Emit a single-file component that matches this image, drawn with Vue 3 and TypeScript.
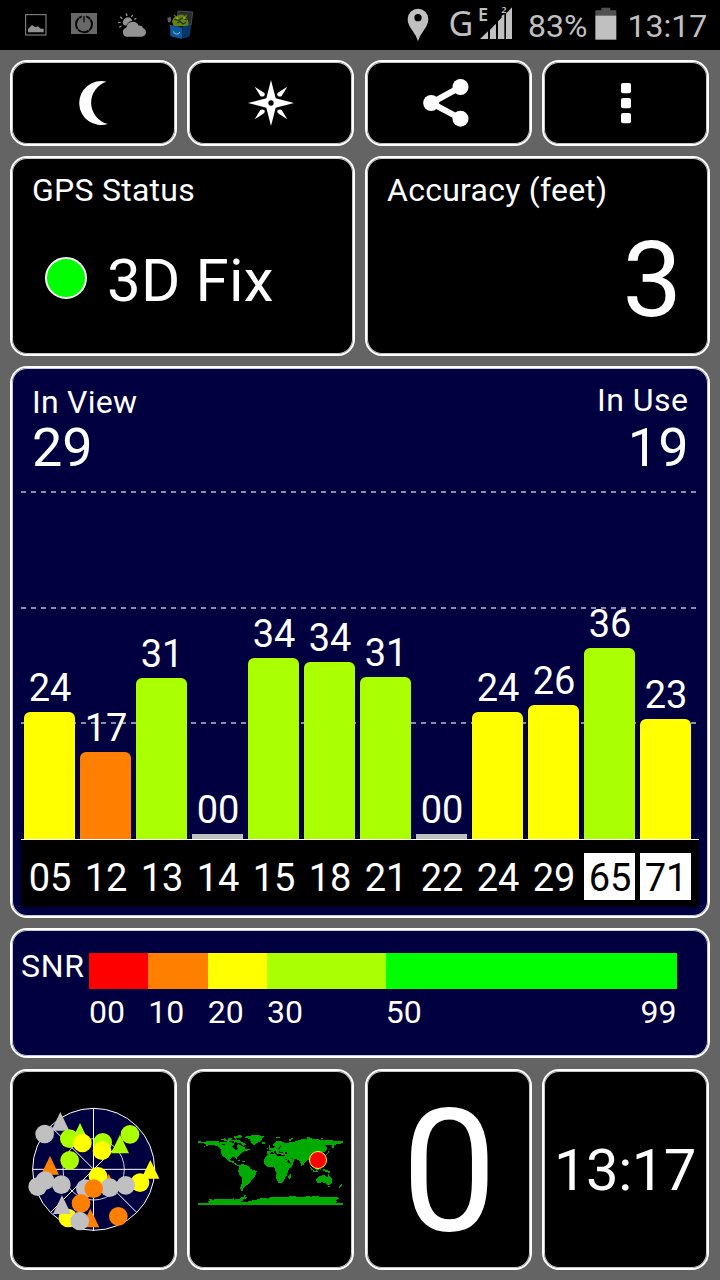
<script setup lang="ts">
interface Satellite {
  id: string
  snr: string
  height: number
  color: string
  inverted?: boolean
}

const LIME = '#aaff00'
const YELLOW = '#ffff00'
const ORANGE = '#ff8000'
const GREY = '#c0c0c0'

const satellites: Satellite[] = [
  { id: '05', snr: '24', height: 127, color: YELLOW },
  { id: '12', snr: '17', height: 87, color: ORANGE },
  { id: '13', snr: '31', height: 161, color: LIME },
  { id: '14', snr: '00', height: 5, color: GREY },
  { id: '15', snr: '34', height: 181, color: LIME },
  { id: '18', snr: '34', height: 177, color: LIME },
  { id: '21', snr: '31', height: 162, color: LIME },
  { id: '22', snr: '00', height: 5, color: GREY },
  { id: '24', snr: '24', height: 127, color: YELLOW },
  { id: '29', snr: '26', height: 134, color: YELLOW },
  { id: '65', snr: '36', height: 191, color: LIME, inverted: true },
  { id: '71', snr: '23', height: 120, color: YELLOW, inverted: true },
]

const scale = [
  { label: '00', span: 10, color: '#ff0000' },
  { label: '10', span: 10, color: ORANGE },
  { label: '20', span: 10, color: YELLOW },
  { label: '30', span: 20, color: LIME },
  { label: '50', span: 49, color: '#00ff00' },
]

type Mark = { t?: boolean; x: number; y: number; c: string }

// Drawn in order; triangles use x/y as the centre of their bounding box.
const marks: Mark[] = [
  { t: true, x: 181, y: 184, c: GREY },
  { x: 134, y: 222, c: GREY },
  { t: true, x: 240, y: 217, c: LIME },
  { x: 208, y: 236, c: LIME },
  { x: 247, y: 249, c: YELLOW },
  { x: 308, y: 247, c: LIME },
  { x: 390, y: 223, c: LIME },
  { t: true, x: 360, y: 252, c: LIME },
  { x: 306, y: 272, c: YELLOW },
  { x: 209, y: 301, c: LIME },
  { t: true, x: 150, y: 316, c: ORANGE },
  { x: 135, y: 362, c: GREY },
  { x: 113, y: 380, c: GREY },
  { x: 184, y: 374, c: GREY },
  { t: true, x: 326, y: 369, c: ORANGE },
  { x: 256, y: 386, c: GREY },
  { x: 294, y: 349, c: YELLOW },
  { x: 329, y: 383, c: GREY },
  { x: 420, y: 368, c: YELLOW },
  { x: 377, y: 376, c: GREY },
  { x: 281, y: 386, c: ORANGE },
  { t: true, x: 451, y: 328, c: YELLOW },
  { x: 243, y: 430, c: ORANGE },
  { x: 204, y: 474, c: YELLOW },
  { t: true, x: 186, y: 434, c: GREY },
  { t: true, x: 271, y: 474, c: ORANGE },
  { x: 239, y: 483, c: GREY },
  { x: 355, y: 469, c: ORANGE },
]

const triangle = (m: Mark) =>
  `${m.x},${m.y - 28} ${m.x + 27},${m.y + 28} ${m.x - 27},${m.y + 28}`
</script>

<template>
  <div class="screen">
    <header class="status">
      <svg class="notes" width="180" height="50" viewBox="60 0 540 150">
        <rect x="77" y="44" width="61" height="61" fill="none" stroke="#929292" stroke-width="3" />
        <path d="M84 97V87L96 75L106 82L114 79L122 86L131 86V97Z" fill="#929292" />
        <rect x="213" y="39" width="78" height="63" fill="#686868" />
        <circle cx="252" cy="73" r="24" fill="none" stroke="#080808" stroke-width="6" stroke-dasharray="35.700 2" stroke-dashoffset="16" />
        <path d="M252 43V56" stroke="#686868" stroke-width="13" />
        <path d="M252 48V67" stroke="#080808" stroke-width="4" />
        <g fill="#929292">
          <path d="M369 72A16 16 0 0 1 383 52Q392 52 397 62Q383 65 379 77Q373 77 369 72Z" />
          <path d="M379 110A14 14 0 0 1 379 83Q382 65 398 65Q411 65 416 77Q426 75 430 85Q438 88 438 97Q437 110 424 110Z" />
        </g>
        <path d="M379 40L381 48M398 45L394 51M361 50L367 56M354 67L362 68M358 82L364 78M403 58L409 55" stroke="#929292" stroke-width="4" />
        <path d="M534 33L578 36L573 76L531 70Z" fill="#292d30" stroke="#484b4c" stroke-width="3" />
        <path d="M521 78Q511 59 525 51L520 43L531 49Q543 39 554 48L562 42L558 53Q570 66 563 79Z" fill="#66820c" />
        <path d="M523 58L536 61L547 54L561 60M532 69L540 64L549 72L558 67" fill="none" stroke="#24350a" stroke-width="4" />
        <circle cx="532" cy="55" r="3" fill="#9bb52b" /><circle cx="552" cy="54" r="3" fill="#9bb52b" />
        <path d="M510 76L547 84V117L511 109Z" fill="#0b579b" />
        <path d="M547 84L574 72L569 109L547 117Z" fill="#063768" />
        <path d="M508 76L547 82L574 71" fill="none" stroke="#1d5f9c" stroke-width="2" />
        <path d="M520 94Q521 102 530 102Q539 103 539 96" fill="none" stroke="#a6b7c6" stroke-width="3" />
        <path d="M502 53L512 51L514 59L510 68L504 66Z" fill="#59616b" />
      </svg>
      <svg class="pin" width="22" height="34" viewBox="140 24 66 102">
        <path d="M173 124Q168 107 155 90Q142 73 142 57A31 31 0 0 1 204 57Q204 73 191 90Q178 107 173 124ZM173 42A11 11 0 1 0 173 64A11 11 0 1 0 173 42Z" fill="#c0c0c0" fill-rule="evenodd" />
      </svg>
      <span class="net">G</span>
      <svg class="signal" width="36" height="40" viewBox="354 0 108 120">
        <text x="354" y="64" class="tiny-e">E</text>
        <text x="424" y="38" class="tiny-2">2</text>
        <path d="M360 117L384 94V117ZM390 117V89L408 71V117ZM414 117V64L425 53V47L433 43V117ZM438 117V41L456 22V117Z" fill="#c0c0c0" />
      </svg>
      <span class="pct">83%</span>
      <svg class="battery" width="22" height="34" viewBox="704 22 66 102">
        <path d="M723 24H750V32H768V49H705V32H723Z" fill="#505050" />
        <rect x="705" y="48" width="63" height="72" fill="#c0c0c0" />
      </svg>
      <span class="clock">13:17</span>
    </header>

    <main class="board">
      <section class="row buttons">
        <button class="card center">
          <svg width="50" height="50" viewBox="205.5 234 150 150">
            <path d="M318 245A66 66 0 1 0 322 372A66 66 0 0 1 318 245Z" fill="#fff" />
          </svg>
        </button>
        <button class="card center">
          <svg width="50" height="50" viewBox="198 84 150 150">
            <path d="M273 90L287 145L342 159L287 173L273 228L259 173L204 159L259 145Z" fill="#fff" />
            <g fill="#fff">
              <path d="M224 110L250 127Q257 131 253 137Q247 142 241 138Z" />
              <path d="M322 110L296 127Q289 131 293 137Q299 142 305 138Z" />
              <path d="M224 208L250 191Q257 187 253 181Q247 176 241 180Z" />
              <path d="M322 208L296 191Q289 187 293 181Q299 176 305 180Z" />
            </g>
            <circle cx="273" cy="159" r="8" fill="#000" />
          </svg>
        </button>
        <button class="card center">
          <svg width="50" height="50" viewBox="188.5 234 150 150" overflow="visible">
            <path d="M301 261L213 309L301 356" fill="none" stroke="#fff" stroke-width="18" />
            <g fill="#fff"><circle cx="301" cy="261" r="24" /><circle cx="213" cy="309" r="24" /><circle cx="301" cy="356" r="24" /></g>
          </svg>
        </button>
        <button class="card center">
          <svg width="50" height="50" viewBox="720 234 150 150">
            <g fill="#fff">
              <rect x="783" y="249" width="30" height="31" rx="6" />
              <rect x="783" y="294" width="30" height="31" rx="6" />
              <rect x="783" y="339" width="30" height="31" rx="6" />
            </g>
          </svg>
        </button>
      </section>

      <section class="row readouts">
        <article class="card info">
          <div class="label">GPS Status</div>
          <div class="fix"><i class="dot"></i><span>3D Fix</span></div>
        </article>
        <article class="card info">
          <div class="label">Accuracy (feet)</div>
          <div class="accuracy">3</div>
        </article>
      </section>

      <section class="card navy chart">
        <svg class="grid-lines" width="678" height="240" viewBox="0 0 678 240">
          <path d="M0 2H675M0 118H675M0 233H675" stroke="#8c8ca6" stroke-width="2" stroke-dasharray="5 5" />
        </svg>
        <div class="totals">
          <div><div class="label">In View</div><div class="count">29</div></div>
          <div class="right"><div class="label">In Use</div><div class="count">19</div></div>
        </div>
        <div class="plot">
          <div v-for="s in satellites" :key="s.id" class="col">
            <span class="snr">{{ s.snr }}</span>
            <div class="bar" :class="{ flat: s.height < 10 }" :style="{ height: s.height + 'px', background: s.color }"></div>
          </div>
        </div>
        <div class="ids">
          <span v-for="s in satellites" :key="s.id" class="id" :class="{ inverted: s.inverted }">{{ s.id }}</span>
        </div>
      </section>

      <section class="card navy legend">
        <span class="legend-title">SNR</span>
        <div class="scale">
          <div v-for="s in scale" :key="s.label" class="seg" :style="{ flexGrow: s.span }">
            <div class="swatch" :style="{ background: s.color }"></div>
            <div class="ticks"><span>{{ s.label }}</span><span v-if="s.label === '50'">99</span></div>
          </div>
        </div>
      </section>

      <section class="row bottom">
        <article class="card center">
          <svg width="134" height="134" viewBox="81 129 402 402">
            <circle cx="281" cy="328" r="183" fill="#000040" />
            <g fill="none" stroke="#fff" stroke-width="3">
              <circle cx="281" cy="328" r="183" />
              <circle cx="281" cy="328" r="92" stroke="#d0d0e0" />
              <path d="M97 328H465M280.500 145V512M152 199L410 457M410 199L152 457" />
            </g>
            <template v-for="(m, i) in marks" :key="i">
              <polygon v-if="m.t" :points="triangle(m)" :fill="m.c" />
              <circle v-else :cx="m.x" :cy="m.y" r="28" :fill="m.c" />
            </template>
          </svg>
        </article>
        <article class="card center">
          <svg width="150" height="100" viewBox="33 0 450 300">
            <g fill="#00aa00" shape-rendering="crispEdges">
              <path d="M39 62H48V66H57L70 62L100 64L115 67L130 64L145 69L151 65L146 76L141 80L148 87L154 91L158 86L155 78L160 73L168 76L175 81L183 83L180 88L190 88L187 93L178 94L171 98L164 106L158 110L156 119L151 112L140 112L136 119L140 124L148 121L147 128L153 130L157 136L166 135L162 139L153 136L147 130L135 126L128 120L118 111L112 108L108 98V89L99 80L87 75L74 74L65 79L56 80L67 75L57 72L60 68L39 68Z" />
              <path d="M106 58L118 55L126 60L134 57L145 61L155 58L164 60L171 67L180 69L183 76L174 77L167 70L155 67L146 64L129 64L118 62ZM128 53H140V56H128ZM145 48L165 46L178 48L166 51L170 55L158 53L150 57ZM148 51H157V54H148Z" />
              <path d="M180 50L193 48L206 45L224 46L230 48L240 50L232 54L230 61L223 66L215 69L206 76L200 70L197 63L192 56L181 54Z" />
              <path d="M232 67H240V71H232ZM188 86H194V91H188ZM152 119L163 121L171 124L162 123ZM172 124H181V126H172Z" />
              <path d="M164 137L170 132L180 134L188 138L194 141L197 147L206 150L215 154L212 163L207 173L200 179L195 187L187 195L180 198L177 205L172 206L176 213L168 212L165 204L169 194L172 181V173L163 163L159 154L162 145Z" />
              <path d="M247 104L257 101L272 102L276 107L288 108L298 108L304 118L310 129L317 131L326 129L321 139L311 147L308 157L306 166L300 173L297 182L290 188L281 190L276 182L273 171L275 161L271 152L268 142L259 140L247 142L238 131L237 121L242 111Z" />
              <path d="M316 162H318L317 174L313 178L309 174L311 167Z" />
              <path d="M246 101V93H255L259 91L254 87L262 84L273 81L269 78L263 76L267 69L277 63L290 64L297 68L303 70L316 66L330 65L343 59L360 57L373 53L387 57L401 58L410 61L435 60L455 63L473 62V68L465 72L449 74L446 83L440 84L441 74L431 76L420 76L426 82L427 89L418 96L411 97L414 103L409 112L404 119L407 128L402 135L395 128L389 130L391 141L384 137L377 121L368 121L359 128L355 135L350 138L345 124L337 119L329 117L326 125L318 131L308 123L302 113L299 106L290 105L286 101L278 104L274 97L277 96L270 93L266 96L272 102L269 104L261 95L254 102Z" />
              <path d="M250 78L254 76L256 83L260 87L251 90L253 83ZM246 84H250V88H246ZM273 51L287 50L282 54H275ZM310 60L320 55L328 53L319 60L313 64ZM364 53L378 51L371 55ZM403 53L417 54L409 57ZM424 103L429 96V90L433 96L426 105L418 109ZM373 138L381 145L386 152L380 150ZM385 153H398V155H385ZM390 145L401 139L402 148L394 152ZM404 146L411 147L406 152ZM413 148L426 149L436 155L434 159L425 156L415 152Z" />
              <path d="M394 176L403 169L411 166L419 164L422 170L427 172L430 162L435 170L441 177L440 187L435 195L427 194L420 188L410 187L401 190L395 188Z" />
              <path d="M430 198H436V201H430ZM458 202L466 197L472 190L471 197L463 203Z" />
              <path d="M39 249H75L67 245L75 241L73 238L87 239V236L119 237L135 238L146 235V239L164 237L166 233L178 231L175 228L186 223L181 230L187 234L178 237L171 240L175 242L168 244L171 246H186L191 242L213 241L216 237L238 233L247 236L257 232L300 232L315 229L330 228L341 232L361 231L366 228L379 230L391 227L405 230L426 230L438 232L457 232L462 236L451 241L456 244L451 248L474 249V255H39Z" />
            </g>
            <g fill="#000" shape-rendering="crispEdges">
              <path d="M282 94L294 96V99L282 98ZM299 95H304L307 102L303 104ZM282 82L288 77L285 86L276 88ZM304 117L315 124L312 127ZM317 111L327 117L324 119Z" />
              <path d="M112 73H119V75H112ZM150 101H156V103H150ZM101 66H105V70H101Z" />
            </g>
            <circle cx="399" cy="120" r="25.500" fill="#ff0000" stroke="#ffff00" stroke-width="3" />
          </svg>
        </article>
        <article class="card center"><span class="speed">0</span></article>
        <article class="card center"><span class="time">13:17</span></article>
      </section>
    </main>
  </div>
</template>

<style>
body {
  margin: 0;
  background: #646464;
}
</style>

<style scoped>
.screen {
  width: 720px;
  height: 1280px;
  overflow: hidden;
  background: #646464;
  color: #fff;
  font-family: Roboto, "Noto Sans", sans-serif;
  display: flex;
  flex-direction: column;
}
svg { display: block; flex: none; }

.status {
  height: 50px;
  flex: none;
  background: #000;
  color: #c0c0c0;
  display: flex;
  align-items: flex-start;
  font-size: 32px;
  line-height: 40px;
}
.notes { margin-left: 20px; }
.pin { margin: 8px 0 0 206.500px; }
.net {
  width: 28px;
  margin: 0 0 0 20px;
  font-family: "Noto Sans", sans-serif;
  font-size: 34px;
  line-height: 47px;
}
.signal { margin-left: 1.500px; overflow: visible; }
.tiny-e, .tiny-2 { font-family: "Noto Sans", sans-serif; font-weight: 600; fill: #c0c0c0; }
.tiny-e { font-size: 54px; }
.tiny-2 { font-size: 28px; }
.pct { width: 60px; margin: 6px 0 0 14px; }
.battery { margin: 7px 0 0 6.500px; }
.clock { margin: 6px 0 0 11px; }

.board {
  padding: 10px;
  display: flex;
  flex-direction: column;
  gap: 10px;
}
.row { display: grid; column-gap: 10.333px; }
.buttons { grid-template-columns: repeat(4, 1fr); height: 86px; margin-right: 1px; }
.readouts { grid-template-columns: repeat(2, 1fr); column-gap: 10px; height: 200px; }
.bottom { grid-template-columns: repeat(4, 1fr); height: 201px; margin: 1px 1px 0 0; }

.card {
  box-sizing: border-box;
  min-width: 0;
  margin: 0;
  padding: 0;
  border: 2px solid #fff;
  border-radius: 17px;
  box-shadow: inset 0 0 0 1px #c8c8c8;
  background: #000;
  color: #fff;
  font-family: inherit;
}
.navy { background: #000040; box-shadow: inset 0 0 0 1px #c8c8d8; }
.center { display: flex; align-items: center; justify-content: center; }

.label { font-size: 32px; line-height: 40px; letter-spacing: 0.250px; }
.info { padding: 12px 26px 0 20px; }
.fix {
  display: flex;
  align-items: center;
  margin-top: 41px;
  font-size: 60px;
  line-height: 60px;
  letter-spacing: 0.200px;
}
.dot {
  box-sizing: border-box;
  width: 42px;
  height: 42px;
  margin: 0 20px 6px 13px;
  border: 2px solid #fff;
  border-radius: 50%;
  background: #00ff00;
}
.accuracy { margin-top: 20px; text-align: right; font-size: 106px; line-height: 100px; }

.chart {
  position: relative;
  height: 552px;
  padding: 1px 9px 1px 9px;
}
.grid-lines { position: absolute; left: 9px; top: 122px; }
.totals {
  height: 92px;
  padding: 14px 10.500px 0 11px;
  display: flex;
  justify-content: space-between;
}
.totals .label { line-height: 38px; }
.count { font-size: 54px; line-height: 54px; }
.right { text-align: right; margin-top: -2px; }
.right .label { letter-spacing: 0.500px; }
.right .count { margin-top: 2px; }
.plot {
  position: relative;
  height: 364px;
  padding-left: 3px;
  border-bottom: 1px solid #fff;
  display: flex;
  align-items: flex-end;
  gap: 5px;
}
.col { width: 51px; flex: none; text-align: center; }
.snr { display: block; margin-bottom: 2px; font-size: 38px; line-height: 44px; padding-left: 1px; }
.bar { border-radius: 6px 6px 0 0; }
.flat { border-radius: 0; }
.ids {
  height: 67px;
  padding-left: 3px;
  background: #000;
  display: flex;
  align-items: center;
  gap: 5px;
}
.id {
  box-sizing: border-box;
  width: 51px;
  height: 47px;
  margin-top: 6px;
  padding-left: 1px;
  flex: none;
  text-align: center;
  font-size: 38px;
  line-height: 51px;
}
.inverted { background: #fff; color: #000; }

.legend {
  height: 130px;
  padding: 23px 31.500px 0 9px;
  display: flex;
  font-size: 32px;
}
.legend-title { width: 68px; flex: none; line-height: 26px; letter-spacing: 0.700px; }
.scale { flex: 1; display: flex; }
.seg { flex: 1 1 0; min-width: 0; }
.swatch { height: 36px; }
.ticks { display: flex; justify-content: space-between; line-height: 46px; }

.speed { font-size: 170px; line-height: 190px; padding-top: 4px; padding-left: 2px; }
.time { font-size: 58px; line-height: 60px; letter-spacing: -0.500px; padding-right: 1px; }
</style>
